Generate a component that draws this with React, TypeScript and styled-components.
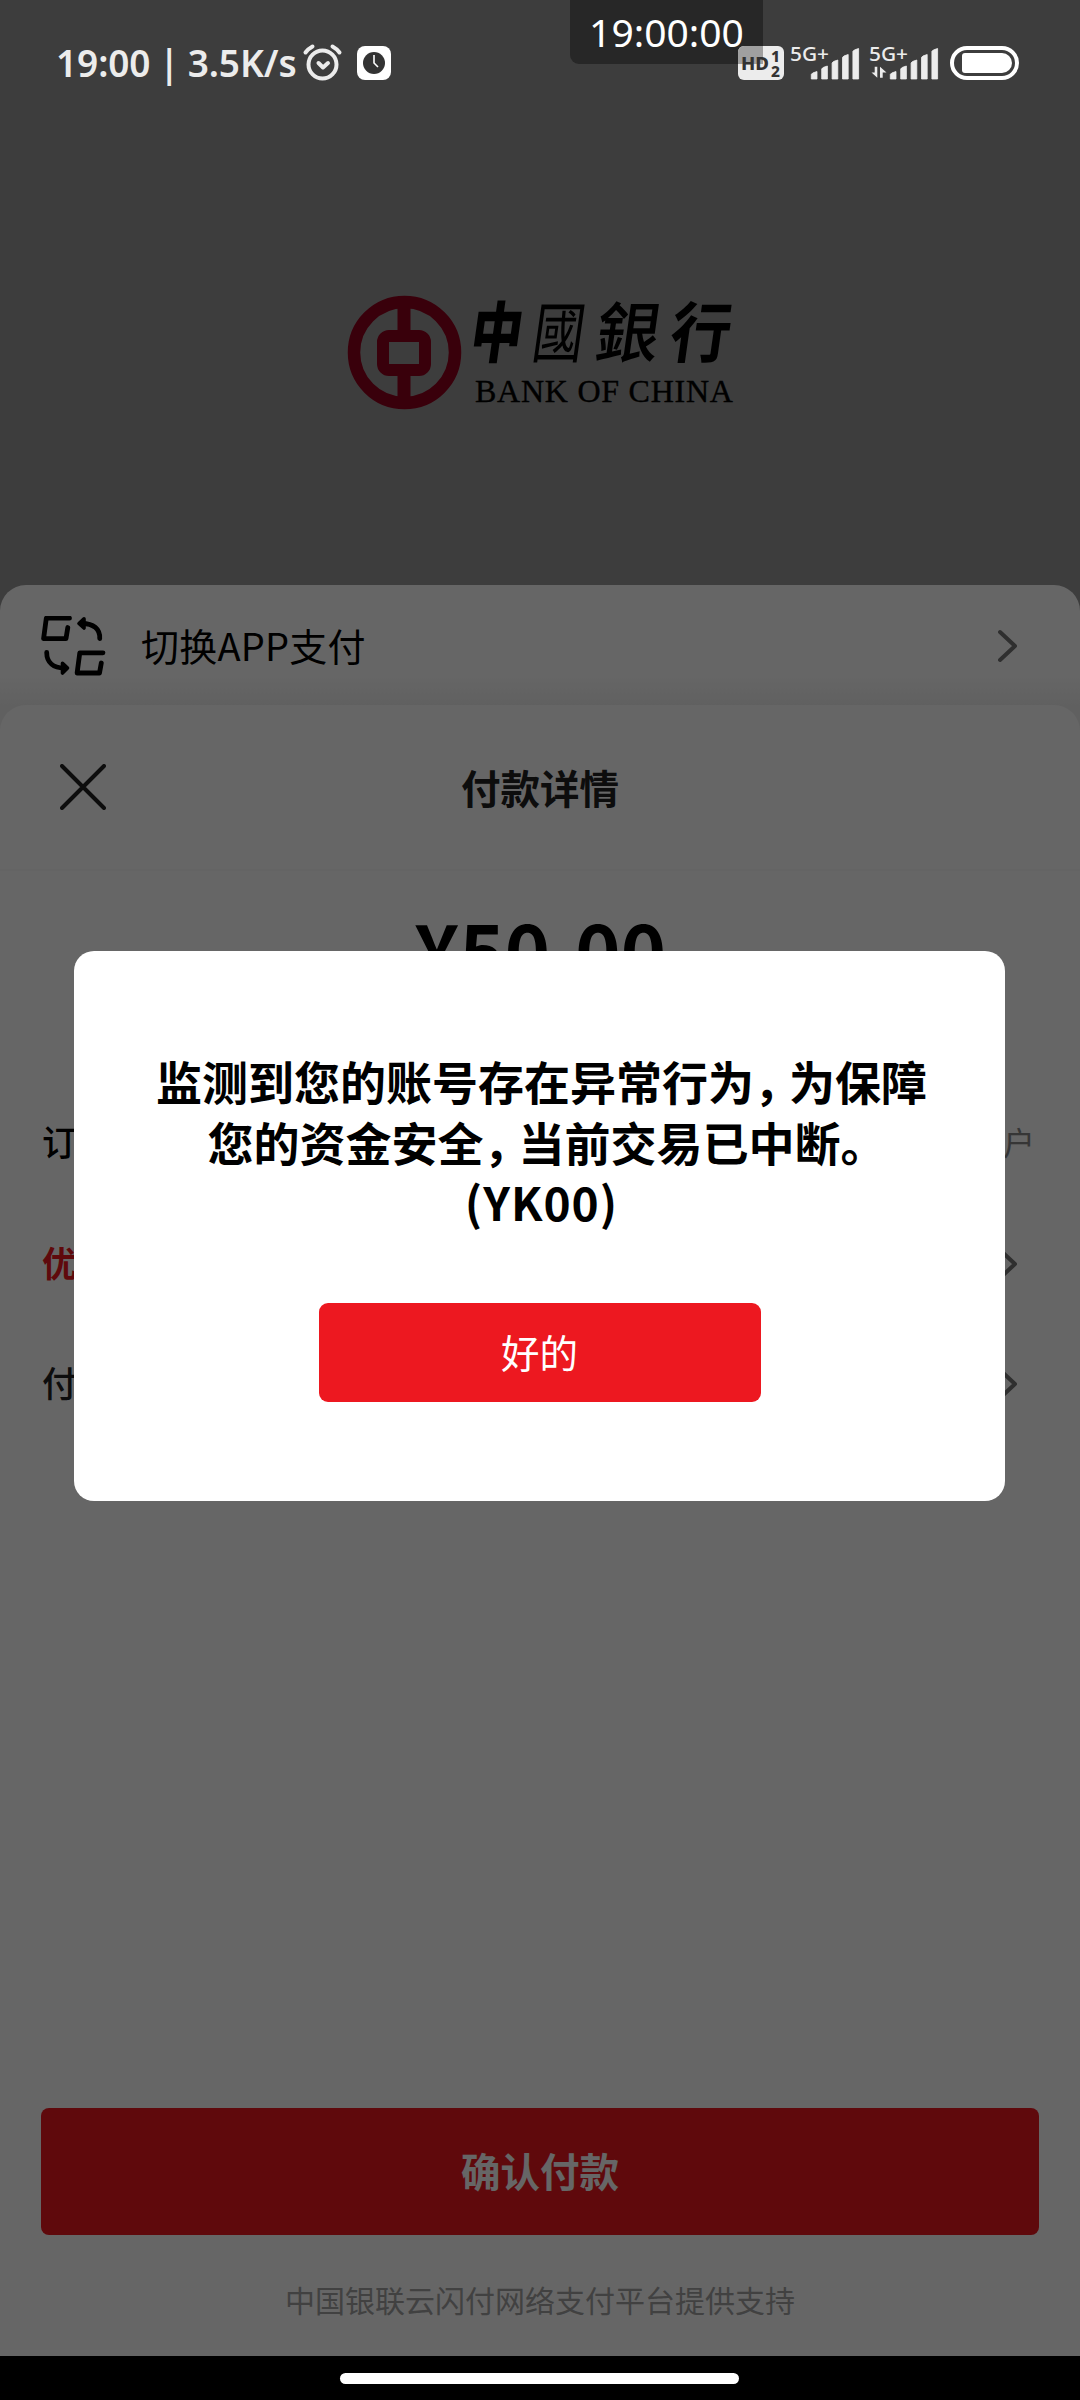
import React from "react";
import styled, { createGlobalStyle } from "styled-components";

const GlobalStyle = createGlobalStyle`
  * {
    box-sizing: border-box;
  }

  body {
    margin: 0;
    font-family: "Noto Sans CJK SC", sans-serif;
    color: #000;
  }
`;

const Screen = styled.div`
  position: relative;
  display: flex;
  flex-direction: column;
  width: 1080px;
  height: 2400px;
  overflow: hidden;
  background: #999;
`;

const Mask = styled.div`
  position: absolute;
  top: 0;
  left: 0;
  display: flex;
  flex-direction: column;
  align-items: center;
  width: 1080px;
  height: 2356px;
  padding: 951px 1px 0 0;
  background: rgba(0, 0, 0, 0.6);
`;

const StatusBar = styled.header`
  position: absolute;
  top: 0;
  left: 0;
  display: flex;
  align-items: center;
  width: 1080px;
  height: 126px;
  padding: 0 61px 0 56px;
  color: #ececec;

  > svg {
    flex: none;
    overflow: visible;
  }
`;

const StatusText = styled.span`
  width: 240px;
  margin-right: 7px;
  padding-bottom: 1px;
  font-family: "Noto Sans", sans-serif;
  font-size: 37px;
  font-weight: 600;
  letter-spacing: -0.1px;
  word-spacing: -1px;
  white-space: nowrap;
`;

const Indicators = styled.div`
  display: flex;
  align-items: center;
  margin-left: auto;

  > svg {
    overflow: visible;
  }
  > svg:nth-child(2) {
    margin: 0 9px 0 6px;
  }
  > svg:nth-child(3) {
    margin-right: 11px;
  }
`;

const TimeStamp = styled.div`
  position: absolute;
  top: 0;
  left: 570px;
  width: 193px;
  height: 64px;
  border-radius: 0 0 9px 9px;
  background: rgba(30, 30, 30, 0.72);
  color: #fff;
  font-family: "Noto Sans", sans-serif;
  font-size: 39px;
  line-height: 64px;
  text-align: center;
`;

const Brand = styled.div`
  display: flex;
  height: 585px;
  padding: 295px 0 0 347px;
`;

const BrandText = styled.div`
  display: flex;
  flex-direction: column;
  width: 270px;
  margin-left: 4px;
`;

const BrandName = styled.div`
  display: grid;
  grid-template-columns: 62px 62px 76px 70px;
  justify-items: center;
  height: 78px;
  font-size: 66px;
  line-height: 66px;
`;

const BrandGlyph = styled.span<{ $weight: number; $stretch: number }>`
  font-weight: ${({ $weight }) => $weight};
  transform: skewX(-8deg) scaleX(${({ $stretch }) => $stretch});
`;

const BrandLatin = styled.div`
  margin-left: 9px;
  font-family: "Liberation Serif", serif;
  font-size: 32px;
  line-height: 36px;
  letter-spacing: 0.75px;
  white-space: nowrap;
  -webkit-text-stroke: 0.4px #000;
`;

const Sheet = styled.section`
  display: flex;
  flex-direction: column;
  height: 1771px;
  border-radius: 26px 26px 0 0;
  background: #fff;
`;

const SwitchRow = styled.div`
  display: flex;
  align-items: center;
  height: 146px;
  margin-bottom: -26px;
  padding: 2px 63px 26px 41px;
  background: linear-gradient(transparent 62%, #f1f1f1 82%);
  border-radius: 26px 26px 0 0;
  font-size: 38px;

  > span {
    flex: 1;
    margin-left: 35px;
    padding-bottom: 3px;
    letter-spacing: 0.2px;
  }
`;

const Detail = styled.div`
  display: flex;
  flex: 1;
  flex-direction: column;
  border-radius: 26px 26px 0 0;
  background: #fff;
`;

const Heading = styled.div`
  display: grid;
  grid-template-columns: 46px 1fr 46px;
  align-items: center;
  height: 166px;
  padding: 0 60px;
  border-bottom: 2px solid #f9f9f9;
  color: #222;
  font-size: 39.5px;
  font-weight: 700;
  text-align: center;

  > span {
    padding-bottom: 1px;
  }
`;

const Amount = styled.div`
  height: 212px;
  padding-top: 32px;
  font-size: 77px;
  font-weight: 700;
  line-height: 90px;
  text-align: center;
`;

const Row = styled.div`
  display: flex;
  align-items: center;
  justify-content: space-between;
  height: 120.5px;
  padding: 0 63px 0 42px;
`;

const RowLabel = styled.span<{ $color?: string; $weight?: number }>`
  padding-bottom: 5px;
  color: ${({ $color }) => $color || "#000"};
  font-size: 35px;
  font-weight: ${({ $weight }) => $weight || 500};
`;

const RowValue = styled.span`
  margin-right: -18px;
  padding-bottom: 5px;
  color: #888;
  font-size: 32px;
`;

const Confirm = styled.button`
  height: 127px;
  margin: auto 41px 0;
  padding: 0 0 4px;
  border: 0;
  border-radius: 8px;
  background: #ed1820;
  color: #fff;
  font-family: inherit;
  font-size: 39.5px;
  font-weight: 700;
`;

const Support = styled.p`
  height: 121px;
  margin: 0;
  color: #a3a3a3;
  font-size: 30px;
  line-height: 129px;
  text-align: center;
`;

const Dialog = styled.div`
  display: flex;
  flex-direction: column;
  align-items: center;
  width: 931px;
  height: 550px;
  padding-top: 99px;
  border-radius: 20px;
  background: #fff;
`;

const Message = styled.p`
  margin: 0;
  height: 253px;
  padding-left: 4px;
  font-size: 46px;
  font-weight: 700;
  line-height: 60.7px;
  text-align: center;
  white-space: nowrap;
`;

const Punctuation = styled.span<{ $trim: number }>`
  margin-right: -${({ $trim }) => $trim}px;
`;

const Code = styled.span`
  letter-spacing: 1px;
`;

const OkButton = styled.button`
  width: 442px;
  height: 99px;
  padding: 0 0 3px;
  border: 0;
  border-radius: 9px;
  background: #ed1820;
  color: #fff;
  font-family: inherit;
  font-size: 38.5px;
`;

const NavBar = styled.footer`
  display: flex;
  justify-content: center;
  height: 44px;
  padding: 17px 1px 0 0;
  background: #000;

  > div {
    width: 399px;
    height: 11px;
    border-radius: 6px;
    background: #fff;
  }
`;

const AlarmIcon = () => (
  <svg width="40" height="40" viewBox="0 0 40 40" fill="none" stroke="#ececec" strokeLinecap="round">
    <circle cx="19.5" cy="21.5" r="14" strokeWidth="4" />
    <path d="M15.5 20L20 24.5l5-4.5" strokeWidth="4" strokeLinejoin="round" />
    <path d="M2.5 9.5Q5 6 9.5 3.5M29.5 3.5Q34 6 36.5 9.5" strokeWidth="4" />
  </svg>
);

const ClockBadge = styled.svg`
  margin-left: 14px;
`;

const ClockIcon = () => (
  <ClockBadge width="34" height="34" viewBox="0 0 34 34">
    <rect width="34" height="34" rx="8" fill="#fff" />
    <circle cx="17" cy="17" r="11" fill="#333" />
    <path d="M17 9v8l4 4" fill="none" stroke="#fff" strokeWidth="1.6" />
  </ClockBadge>
);

const HdIcon = () => (
  <svg width="46" height="34" viewBox="0 0 46 34" fill="#333" fontFamily="Noto Sans" fontWeight="800">
    <rect width="46" height="34" rx="6" fill="#ececec" />
    <path d="M0 18h25V0H6a6 6 0 0 0-6 6z" fill="#a0a0a0" />
    <text x="3" y="24" fontSize="18.5" textLength="28" lengthAdjust="spacingAndGlyphs">
      HD
    </text>
    <text x="33" y="15.5" fontSize="15.5">
      1
    </text>
    <text x="33" y="30.5" fontSize="15.5">
      2
    </text>
  </svg>
);

const SignalIcon = ({ data }: { data?: boolean }) => (
  <svg width="70" height="34" viewBox="0 0 70 34" fill="#ececec">
    <text
      y="15"
      fontFamily="Noto Sans"
      fontSize="19.5"
      fontWeight="500"
      textLength="39"
      lengthAdjust="spacingAndGlyphs"
    >
      5G+
    </text>
    {[7.5, 13, 19, 24.5, 30.5].map((h, i) => (
      <path
        key={h}
        d={`M${21.3 + i * 10.4} 33v${3 - h}q0-1.500 5.700-3v${h}z`}
        stroke="#ececec"
        strokeWidth="0.8"
        strokeLinejoin="round"
      />
    ))}
    {data && <path d="M5.700 20.700h2.600v11L2.500 26.500h3.200zM11 31.700v-11l6.500 5.800h-3.800v5.200z" />}
  </svg>
);

const BatteryIcon = () => (
  <svg width="69" height="34" viewBox="0 0 69 34">
    <rect x="2" y="2" width="65" height="30" rx="15" fill="none" stroke="#fff" strokeWidth="4" />
    <path d="M15 7h37a10 10 0 0 1 0 20H15a3 3 0 0 1-3-3V10a3 3 0 0 1 3-3z" fill="#fff" />
  </svg>
);

const BankLogo = () => (
  <svg width="115" height="115" viewBox="0 0 115 115" fill="none" stroke="#90001c">
    <circle cx="57.5" cy="57.5" r="50.5" strokeWidth="12.5" />
    <rect x="36" y="41" width="42" height="34" rx="6" strokeWidth="12" />
    <path d="M57 8v30M57 78v30" strokeWidth="13" />
  </svg>
);

const SwitchIcon = () => (
  <svg
    width="65"
    height="60"
    viewBox="0 0 65 60"
    fill="none"
    stroke="#000"
    strokeWidth="4.8"
    strokeLinecap="round"
    strokeLinejoin="round"
  >
    <path d="M28.500 2.200H5.300L2.600 22.600H25L26.800 11.500" />
    <path d="M62 36.800H38.800L36.100 57H58.500L60.300 47" />
    <path d="M58.700 22.500C59.200 13 52.500 7.500 41 7.500M5.700 36.500C5.700 47 13 52 23 52" />
    <path d="M43 2.800L38 7.500L43 12zM21.500 47.200L26.500 52L21.500 57z" fill="#000" strokeWidth="3.6" />
  </svg>
);

const CloseIcon = () => (
  <svg width="46" height="46" viewBox="0 0 46 46" stroke="#222" strokeWidth="4" strokeLinecap="round">
    <path d="M2 2l42 42M44 2L2 44" />
  </svg>
);

const Chevron = () => (
  <svg
    width="19"
    height="34"
    viewBox="0 0 19 34"
    fill="none"
    stroke="#757575"
    strokeWidth="4"
    strokeLinecap="round"
    strokeLinejoin="round"
  >
    <path d="M2 3l15 14L2 31" />
  </svg>
);

const App = () => {
  return (
    <>
      <GlobalStyle />
      <Screen>
        <Brand>
          <BankLogo />
          <BrandText>
            <BrandName>
              <BrandGlyph $weight={900} $stretch={0.78}>中</BrandGlyph>
              <BrandGlyph $weight={400} $stretch={0.78}>國</BrandGlyph>
              <BrandGlyph $weight={500} $stretch={0.96}>銀</BrandGlyph>
              <BrandGlyph $weight={700} $stretch={0.92}>行</BrandGlyph>
            </BrandName>
            <BrandLatin>BANK OF CHINA</BrandLatin>
          </BrandText>
        </Brand>
        <Sheet>
          <SwitchRow>
            <SwitchIcon />
            <span>切换APP支付</span>
            <Chevron />
          </SwitchRow>
          <Detail>
            <Heading>
              <CloseIcon />
              <span>付款详情</span>
            </Heading>
            <Amount>¥50.00</Amount>
            <Row>
              <RowLabel>订</RowLabel>
              <RowValue>户</RowValue>
            </Row>
            <Row>
              <RowLabel $color="#ed1820" $weight={700}>
                优
              </RowLabel>
              <Chevron />
            </Row>
            <Row>
              <RowLabel $color="#222">付</RowLabel>
              <Chevron />
            </Row>
            <Confirm>确认付款</Confirm>
            <Support>中国银联云闪付网络支付平台提供支持</Support>
          </Detail>
        </Sheet>
        <NavBar>
          <div />
        </NavBar>

        <Mask>
          <Dialog role="dialog">
            <Message>
              监测到您的账号存在异常行为<Punctuation $trim={11}>，</Punctuation>为保障
              <br />
              您的资金安全<Punctuation $trim={11}>，</Punctuation>当前交易已中断
              <Punctuation $trim={11}>。</Punctuation>
              <br />
              <Code>(YK00)</Code>
            </Message>
            <OkButton>好的</OkButton>
          </Dialog>
        </Mask>
        <TimeStamp>19:00:00</TimeStamp>
        <StatusBar>
          <StatusText>19:00 | 3.5K/s</StatusText>
          <AlarmIcon />
          <ClockIcon />
          <Indicators>
            <HdIcon />
            <SignalIcon />
            <SignalIcon data />
            <BatteryIcon />
          </Indicators>
        </StatusBar>
      </Screen>
    </>
  );
};

export default App;
